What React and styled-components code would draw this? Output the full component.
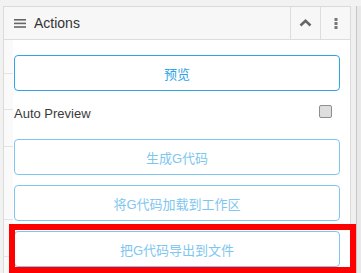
import React, { useState } from 'react';
import styled, { createGlobalStyle } from 'styled-components';

const GlobalStyle = createGlobalStyle`
  html, body {
    margin: 0;
    padding: 0;
    background: #f2f2f2;
    font-family: "Liberation Sans", Arial, "Noto Sans CJK SC", sans-serif;
    overflow: hidden;
  }
`;

const Page = styled.div`
  display: flex;
  height: 273px;
  padding: 6px 0 0 3px;
  box-sizing: border-box;
  overflow: hidden;
`;

const Panel = styled.section`
  width: 348px;
  box-sizing: border-box;
  border: 1px solid #dadada;
  border-bottom: none;
  background: #fff;
  display: flex;
  flex-direction: column;
`;

const Header = styled.header`
  height: 32px;
  display: flex;
  align-items: stretch;
  background: #f7f7f7;
  border-bottom: 1px solid #dddddd;
`;

const Title = styled.div`
  flex: 1;
  display: flex;
  align-items: center;
  gap: 8px;
  padding-left: 10px;
  font-size: 14px;
  color: #333;
`;

const HeaderButton = styled.button`
  all: unset;
  width: 29px;
  display: flex;
  align-items: center;
  justify-content: center;
  border-left: 1px solid #dddddd;
  color: #777;
  cursor: pointer;
`;

const Body = styled.div`
  flex: 1;
  display: flex;
  flex-direction: column;
  padding: 15px 10px 0 10px;
  background-color: #fff;
  background-image:
    linear-gradient(to right, transparent 9px, #fff 9px),
    repeating-linear-gradient(to bottom, #fafafa 0, #fafafa 33px, #e4e4e4 33px, #e4e4e4 34px, #fafafa 34px, #fafafa 36.5px);
`;

const Stack = styled.div`
  display: flex;
  flex-direction: column;
  gap: 10px;
`;

const Slot = styled.div`
  position: relative;

  &::after {
    content: ${(p) => (p.$highlight ? "''" : 'none')};
    position: absolute;
    top: -7px;
    left: -5px;
    right: -16px;
    bottom: -6px;
    border: 6px solid #ff0000;
    pointer-events: none;
  }
`;

const ActionButton = styled.button`
  all: unset;
  box-sizing: border-box;
  width: 100%;
  height: 36px;
  display: flex;
  align-items: center;
  justify-content: center;
  border: 1px solid ${(p) => (p.$muted ? '#7ec6f0' : '#2fa4e7')};
  border-radius: 4px;
  background: #fff;
  color: ${(p) => (p.$muted ? '#7ec6f0' : '#2fa4e7')};
  font-size: 13px;
  cursor: pointer;
`;

const Row = styled.label`
  height: 44px;
  margin-bottom: 4px;
  display: flex;
  align-items: center;
  justify-content: space-between;
  font-size: 13px;
  color: #3a3a3a;
`;

const Check = styled.span`
  width: 11px;
  height: 11px;
  margin: -3px 8px 0 0;
  border: 1px solid #8e8e8e;
  border-radius: 2px;
  background: ${(p) => (p.$on ? '#2fa4e7' : '#dedede')};
`;

const Scrollbar = styled.div`
  width: 10px;
  background: linear-gradient(to right, #f0f0f0 0, #f0f0f0 5px, #c6c6c6 5px, #c6c6c6 6px, #e9e9e9 6px);
`;

const Hamburger = () => (
  <svg width="12" height="9" viewBox="0 0 12 9">
    <rect x="0" y="0" width="12" height="1.6" fill="#666" />
    <rect x="0" y="3.6" width="12" height="1.6" fill="#666" />
    <rect x="0" y="7.2" width="12" height="1.6" fill="#666" />
  </svg>
);

const ChevronUp = () => (
  <svg width="13" height="8" viewBox="0 0 13 8">
    <path d="M1.5 6.5 L6.5 1.8 L11.5 6.5" fill="none" stroke="#666" strokeWidth="2.6" />
  </svg>
);

const Kebab = () => (
  <svg width="4" height="11" viewBox="0 0 4 11">
    <rect x="0.5" y="0" width="3" height="3" fill="#777" />
    <rect x="0.5" y="4" width="3" height="3" fill="#777" />
    <rect x="0.5" y="8" width="3" height="3" fill="#777" />
  </svg>
);

export default function App() {
  const [autoPreview, setAutoPreview] = useState(false);

  return (
    <>
      <GlobalStyle />
      <Page>
        <Panel>
          <Header>
            <Title>
              <Hamburger />
              Actions
            </Title>
            <HeaderButton>
              <ChevronUp />
            </HeaderButton>
            <HeaderButton>
              <Kebab />
            </HeaderButton>
          </Header>
          <Body>
            <ActionButton>预览</ActionButton>
            <Row onClick={() => setAutoPreview(!autoPreview)}>
              Auto Preview
              <Check $on={autoPreview} />
            </Row>
            <Stack>
              <Slot>
                <ActionButton $muted>生成G代码</ActionButton>
              </Slot>
              <Slot>
                <ActionButton $muted>将G代码加载到工作区</ActionButton>
              </Slot>
              <Slot $highlight>
                <ActionButton $muted>把G代码导出到文件</ActionButton>
              </Slot>
            </Stack>
          </Body>
        </Panel>
        <Scrollbar />
      </Page>
    </>
  );
}
